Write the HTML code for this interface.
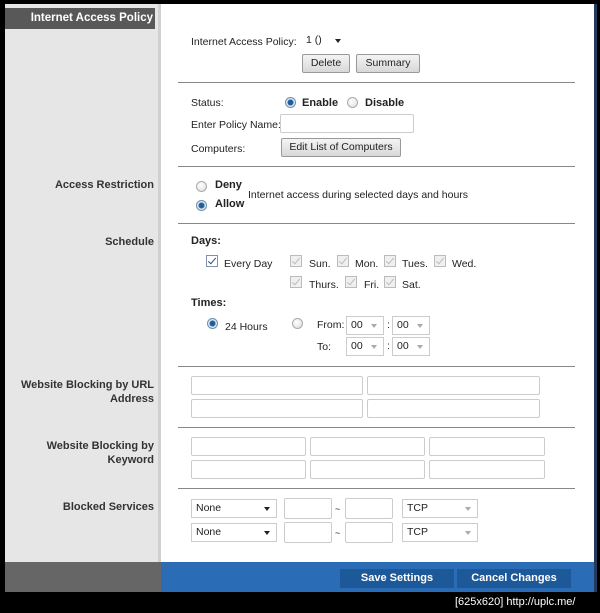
<!DOCTYPE html>
<html><head><meta charset="utf-8"><style>
*{box-sizing:border-box;margin:0;padding:0}
body{width:600px;height:613px;background:#000;position:relative;overflow:hidden;font-family:"Liberation Sans",Arial,sans-serif;font-size:10.5px;color:#222}
.a{position:absolute;white-space:nowrap}
.b{font-weight:bold;font-size:11px}
.lab{position:absolute;right:446px;font-weight:bold;text-align:right;color:#333;font-size:11px;line-height:14px}
.hr{position:absolute;left:178px;width:397px;height:1px;background:#888}
.rad{position:absolute;width:11px;height:11px;border-radius:50%;border:1px solid #aaa;background:radial-gradient(circle at 40% 35%,#fff,#ddd)}
.rad.on{border-color:#6b8fae;background:radial-gradient(circle,#1f5f9a 0,#1f5f9a 2.5px,#e8eef4 3.5px,#cfd8e0 6px)}
.cb{position:absolute;width:12px;height:12px;border:1px solid #bbb;background:#f0f0f0}
.cb::after{content:"";position:absolute;left:3px;top:0px;width:3px;height:7px;border:solid #bbb;border-width:0 1.5px 1.5px 0;transform:rotate(40deg)}
.cb.on{border-color:#8090a8;background:#fff}
.cb.on::after{border-color:#2a4c8a}
.in{position:absolute;border:1px solid #ccc;border-radius:2px;background:#fff;height:19px}
.btn{position:absolute;border:1px solid #999;border-radius:2px;background:linear-gradient(#f4f4f4,#d8d8d8);text-align:center;font-size:10.5px;line-height:17px;height:19px}
.sel{position:absolute;border:1px solid #ccc;background:#fff;height:19px;font-size:10.5px;line-height:17px;padding-left:4px}
.sel::after{content:"";position:absolute;right:6px;top:7px;border:3.5px solid transparent;border-top:4px solid #aaa}
.sel.dk::after{border-top-color:#222}
</style></head><body>
<div class="a" style="left:5px;top:4px;width:156px;height:558px;background:#e6e6e6"></div>
<div class="a" style="left:158px;top:4px;width:3px;height:558px;background:#d0d0d0"></div>
<div class="a" style="left:161px;top:4px;width:433px;height:558px;background:#fff"></div>
<div class="a" style="left:594px;top:4px;width:3px;height:588px;background:#243a5e"></div>
<div class="a" style="left:5px;top:8px;width:150px;height:21px;background:#585858;color:#fff;font-weight:bold;font-size:11.5px;line-height:21px;text-align:right;padding-right:2px">Internet Access Policy</div>

<div class="a" style="left:191px;top:36px">Internet Access Policy:</div>
<div class="sel dk" style="left:301px;top:31px;width:47px;border-color:#fff">1 ()</div>
<div class="btn" style="left:302px;top:54px;width:48px">Delete</div>
<div class="btn" style="left:356px;top:54px;width:64px">Summary</div>
<div class="hr" style="top:82px"></div>

<div class="a" style="left:191px;top:97px">Status:</div>
<div class="rad on" style="left:285px;top:97px"></div>
<div class="a b" style="left:302px;top:97px">Enable</div>
<div class="rad" style="left:347px;top:97px"></div>
<div class="a b" style="left:365px;top:97px">Disable</div>
<div class="a" style="left:191px;top:119px">Enter Policy Name:</div>
<div class="in" style="left:280px;top:114px;width:134px"></div>
<div class="a" style="left:191px;top:143px">Computers:</div>
<div class="btn" style="left:281px;top:138px;width:120px">Edit List of Computers</div>
<div class="hr" style="top:166px"></div>

<div class="lab" style="top:178px">Access Restriction</div>
<div class="rad" style="left:196px;top:181px"></div>
<div class="a b" style="left:215px;top:179px">Deny</div>
<div class="a" style="left:248px;top:189px">Internet access during selected days and hours</div>
<div class="rad on" style="left:196px;top:200px"></div>
<div class="a b" style="left:215px;top:198px">Allow</div>
<div class="hr" style="top:223px"></div>

<div class="lab" style="top:235px">Schedule</div>
<div class="a b" style="left:191px;top:235px">Days:</div>
<div class="cb on" style="left:206px;top:255px"></div><div class="a" style="left:224px;top:258px">Every Day</div>
<div class="cb" style="left:290px;top:255px"></div><div class="a" style="left:309px;top:258px">Sun.</div>
<div class="cb" style="left:337px;top:255px"></div><div class="a" style="left:355px;top:258px">Mon.</div>
<div class="cb" style="left:384px;top:255px"></div><div class="a" style="left:402px;top:258px">Tues.</div>
<div class="cb" style="left:434px;top:255px"></div><div class="a" style="left:452px;top:258px">Wed.</div>
<div class="cb" style="left:290px;top:276px"></div><div class="a" style="left:309px;top:279px">Thurs.</div>
<div class="cb" style="left:345px;top:276px"></div><div class="a" style="left:364px;top:279px">Fri.</div>
<div class="cb" style="left:384px;top:276px"></div><div class="a" style="left:402px;top:279px">Sat.</div>
<div class="a b" style="left:191px;top:297px">Times:</div>
<div class="rad on" style="left:207px;top:318px"></div><div class="a" style="left:225px;top:321px">24 Hours</div>
<div class="rad" style="left:292px;top:318px"></div>
<div class="a" style="left:317px;top:319px">From:</div>
<div class="sel" style="left:346px;top:316px;width:38px">00</div>
<div class="a" style="left:387px;top:319px">:</div>
<div class="sel" style="left:392px;top:316px;width:38px">00</div>
<div class="a" style="left:317px;top:341px">To:</div>
<div class="sel" style="left:346px;top:337px;width:38px">00</div>
<div class="a" style="left:387px;top:340px">:</div>
<div class="sel" style="left:392px;top:337px;width:38px">00</div>
<div class="hr" style="top:366px"></div>

<div class="lab" style="top:378px">Website Blocking by URL<br>Address</div>
<div class="in" style="left:191px;top:376px;width:172px"></div>
<div class="in" style="left:367px;top:376px;width:173px"></div>
<div class="in" style="left:191px;top:399px;width:172px"></div>
<div class="in" style="left:367px;top:399px;width:173px"></div>
<div class="hr" style="top:427px"></div>

<div class="lab" style="top:439px">Website Blocking by<br>Keyword</div>
<div class="in" style="left:191px;top:437px;width:115px"></div>
<div class="in" style="left:310px;top:437px;width:115px"></div>
<div class="in" style="left:429px;top:437px;width:116px"></div>
<div class="in" style="left:191px;top:460px;width:115px"></div>
<div class="in" style="left:310px;top:460px;width:115px"></div>
<div class="in" style="left:429px;top:460px;width:116px"></div>
<div class="hr" style="top:488px"></div>

<div class="lab" style="top:500px">Blocked Services</div>
<div class="sel dk" style="left:191px;top:499px;width:86px">None</div>
<div class="in" style="left:284px;top:498px;width:48px;height:21px"></div>
<div class="a" style="left:335px;top:504px;font-size:9px">~</div>
<div class="in" style="left:345px;top:498px;width:48px;height:21px"></div>
<div class="sel" style="left:402px;top:499px;width:76px">TCP</div>
<div class="sel dk" style="left:191px;top:523px;width:86px">None</div>
<div class="in" style="left:284px;top:522px;width:48px;height:21px"></div>
<div class="a" style="left:335px;top:528px;font-size:9px">~</div>
<div class="in" style="left:345px;top:522px;width:48px;height:21px"></div>
<div class="sel" style="left:402px;top:523px;width:76px">TCP</div>

<div class="a" style="left:5px;top:562px;width:156px;height:30px;background:#666"></div>
<div class="a" style="left:161px;top:562px;width:433px;height:30px;background:#2a6cb6"></div>
<div class="a" style="left:340px;top:569px;width:114px;height:19px;background:#1d5898;color:#fff;text-align:center;line-height:19px;font-weight:bold;font-size:11px">Save Settings</div>
<div class="a" style="left:457px;top:569px;width:114px;height:19px;background:#1d5898;color:#fff;text-align:center;line-height:19px;font-weight:bold;font-size:11px">Cancel Changes</div>
<div class="a" style="left:455px;top:596px;color:#fff;font-family:'Liberation Sans',sans-serif;font-size:11px">[625x620] http://uplc.me/</div>
</body></html>
